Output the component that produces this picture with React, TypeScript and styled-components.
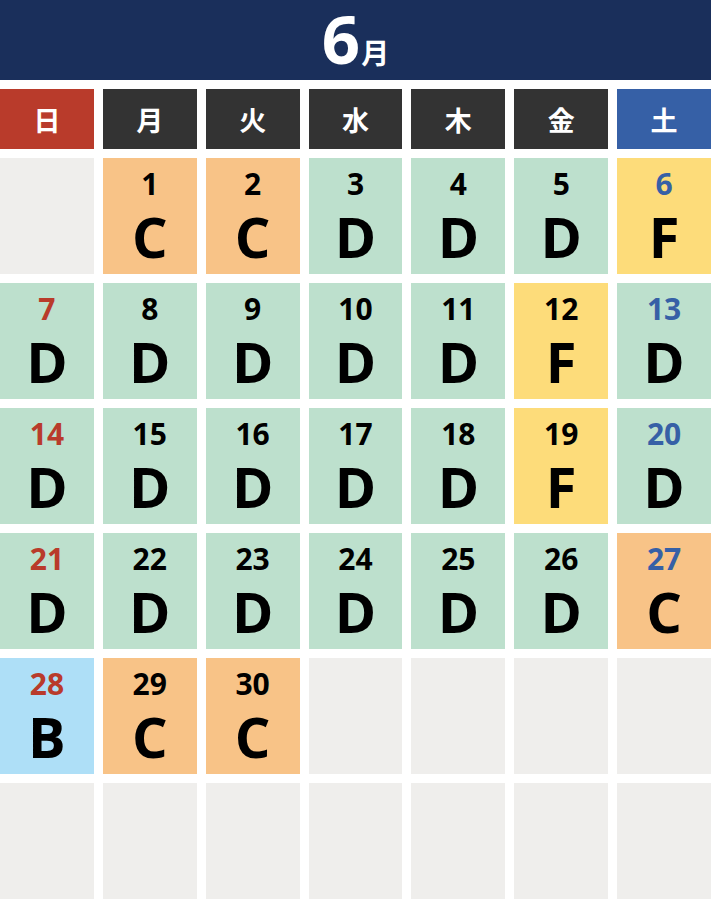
import React from "react";
import styled, { createGlobalStyle } from "styled-components";

const GlobalStyle = createGlobalStyle`
  html, body {
    margin: 0;
    padding: 0;
    background: #ffffff;
  }
  body {
    font-family: "Open Sans", "Noto Sans CJK JP", sans-serif;
  }
`;

const palette = {
  navy: "#1a2f5b",
  red: "#b93b2b",
  dark: "#333333",
  blue: "#3660a6",
  empty: "#efeeec",
  C: "#f8c387",
  D: "#bde0cd",
  F: "#fddc7a",
  B: "#aedff7",
};

type Grade = "B" | "C" | "D" | "F";
type DayKind = "sun" | "sat" | "weekday";

const Page = styled.div`
  width: 711px;
  display: flex;
  flex-direction: column;
  gap: 9px;
`;

const Header = styled.div`
  height: 80px;
  background: ${palette.navy};
  color: #ffffff;
  display: flex;
  align-items: baseline;
  justify-content: center;
  padding-top: 6px;
  box-sizing: border-box;
  font-weight: 700;
`;

const MonthNumber = styled.span`
  font-family: "Open Sans", sans-serif;
  font-size: 67px;
  line-height: 64px;
  letter-spacing: -1px;
`;

const MonthUnit = styled.span`
  font-family: "Noto Sans CJK JP", sans-serif;
  font-size: 28px;
  line-height: 28px;
  margin-left: 2px;
`;

const Grid = styled.div`
  display: grid;
  grid-template-columns: repeat(7, 1fr);
  column-gap: 9px;
  row-gap: 9px;
`;

const WeekdayCell = styled.div<{ $kind: DayKind }>`
  height: 60px;
  display: flex;
  align-items: center;
  justify-content: center;
  color: #ffffff;
  font-family: "Noto Sans CJK JP", sans-serif;
  font-weight: 700;
  font-size: 27px;
  background: ${({ $kind }) =>
    $kind === "sun" ? palette.red : $kind === "sat" ? palette.blue : palette.dark};
`;

const DayCell = styled.div<{ $grade?: Grade }>`
  height: 116px;
  background: ${({ $grade }) => ($grade ? palette[$grade] : palette.empty)};
  display: flex;
  flex-direction: column;
  align-items: center;
  color: #000000;
`;

const DayNumber = styled.span<{ $kind: DayKind }>`
  margin-top: 11px;
  font-size: 30px;
  line-height: 30px;
  font-weight: 700;
  color: ${({ $kind }) =>
    $kind === "sun" ? palette.red : $kind === "sat" ? palette.blue : "#000000"};
`;

const GradeLetter = styled.span`
  margin-top: 9px;
  font-size: 56px;
  line-height: 56px;
  font-weight: 700;
`;

const weekdays = ["日", "月", "火", "水", "木", "金", "土"];

const grades: Record<number, Grade> = {
  1: "C", 2: "C", 3: "D", 4: "D", 5: "D", 6: "F",
  7: "D", 8: "D", 9: "D", 10: "D", 11: "D", 12: "F", 13: "D",
  14: "D", 15: "D", 16: "D", 17: "D", 18: "D", 19: "F", 20: "D",
  21: "D", 22: "D", 23: "D", 24: "D", 25: "D", 26: "D", 27: "C",
  28: "B", 29: "C", 30: "C",
};

const kindOf = (col: number): DayKind => (col === 0 ? "sun" : col === 6 ? "sat" : "weekday");

const App: React.FC = () => {
  const offset = 1; // June 1st starts on Monday
  const cells = Array.from({ length: 42 }, (_, i) => {
    const day = i - offset + 1;
    return day >= 1 && day <= 30 ? day : null;
  });

  return (
    <>
      <GlobalStyle />
      <Page>
        <Header>
          <MonthNumber>6</MonthNumber>
          <MonthUnit>月</MonthUnit>
        </Header>
        <Grid>
          {weekdays.map((w, i) => (
            <WeekdayCell key={w} $kind={kindOf(i)}>
              {w}
            </WeekdayCell>
          ))}
          {cells.map((day, i) =>
            day ? (
              <DayCell key={i} $grade={grades[day]}>
                <DayNumber $kind={kindOf(i % 7)}>{day}</DayNumber>
                <GradeLetter>{grades[day]}</GradeLetter>
              </DayCell>
            ) : (
              <DayCell key={i} />
            )
          )}
        </Grid>
      </Page>
    </>
  );
};

export default App;
